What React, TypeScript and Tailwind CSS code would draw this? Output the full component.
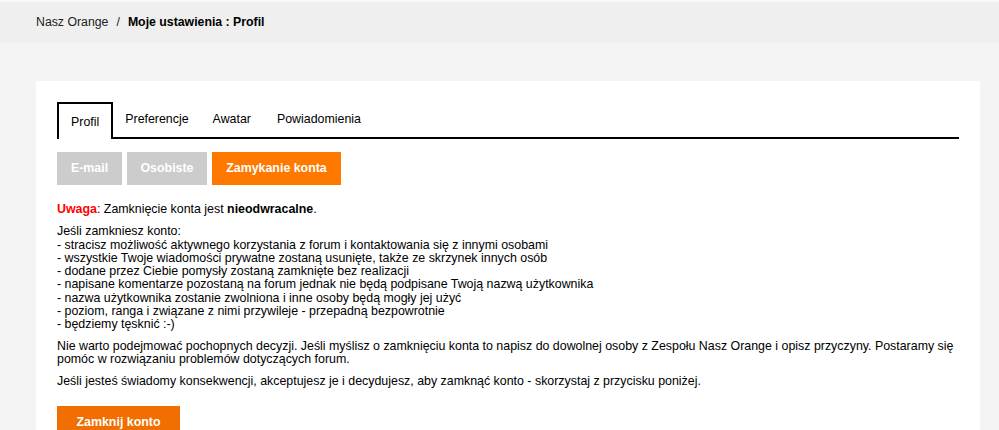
import React from "react";

export default function App() {
  const font = { fontFamily: '"Liberation Sans", Arial, sans-serif' };
  return (
    <div className="min-h-[430px] w-[999px] bg-[#f4f4f4] text-[12.4px] text-black" style={font}>
      <div className="h-[2px] bg-[#f8f8f8]" />
      <div className="flex h-[41px] items-center bg-[#efefef] pl-[36px] text-[12.3px]">
        <span className="text-[#222]">Nasz Orange</span>
        <span className="mx-[8px] text-[#222]">/</span>
        <span className="font-bold">Moje ustawienia : Profil</span>
      </div>
      <div className="pt-[38px]">
        <div className="ml-[36px] w-[944px] bg-white px-[21px] pt-[21px] pb-[10px]">
          <div className="flex h-[37px] items-end border-b-2 border-black">
            <div className="-mb-[2px] flex h-[37px] items-center border-2 border-b-0 border-black bg-white px-[12px] pt-[2px]">
              Profil
            </div>
            <div className="flex h-[35px] items-center pl-[12px] pr-[12px] pb-[1px]">Preferencje</div>
            <div className="flex h-[35px] items-center pl-[12px] pr-[13px] pb-[1px]">Awatar</div>
            <div className="flex h-[35px] items-center pl-[13px] pr-[12px] pb-[1px]">Powiadomienia</div>
          </div>
          <div className="mt-[13px] flex gap-[5px]">
            <button className="h-[33px] w-[65px] bg-[#cccccc] font-bold text-white">E-mail</button>
            <button className="h-[33px] w-[80px] bg-[#cccccc] font-bold text-white">Osobiste</button>
            <button className="h-[33px] w-[129px] bg-[#ff7900] font-bold text-white">Zamykanie konta</button>
          </div>
          <div className="mt-[18px] -mr-[6px] leading-[13.3px]">
            <p>
              <span className="font-bold text-[#ff0000]">Uwaga</span>: Zamknięcie konta jest{" "}
              <span className="font-bold">nieodwracalne</span>.
            </p>
            <p className="mt-[9px]">
              Jeśli zamkniesz konto:
              <br />- stracisz możliwość aktywnego korzystania z forum i kontaktowania się z innymi osobami
              <br />- wszystkie Twoje wiadomości prywatne zostaną usunięte, także ze skrzynek innych osób
              <br />- dodane przez Ciebie pomysły zostaną zamknięte bez realizacji
              <br />- napisane komentarze pozostaną na forum jednak nie będą podpisane Twoją nazwą użytkownika
              <br />- nazwa użytkownika zostanie zwolniona i inne osoby będą mogły jej użyć
              <br />- poziom, ranga i związane z nimi przywileje - przepadną bezpowrotnie
              <br />- będziemy tęsknić :-)
            </p>
            <p className="mt-[8px]">
              Nie warto podejmować pochopnych decyzji. Jeśli myślisz o zamknięciu konta to napisz do dowolnej osoby z
              Zespołu Nasz Orange i opisz przyczyny. Postaramy się pomóc w rozwiązaniu problemów dotyczących forum.
            </p>
            <p className="mt-[9px]">
              Jeśli jesteś świadomy konsekwencji, akceptujesz je i decydujesz, aby zamknąć konto - skorzystaj z
              przycisku poniżej.
            </p>
          </div>
          <button className="mt-[17px] h-[33px] w-[123px] bg-[#f16e00] font-bold text-white">Zamknij konto</button>
        </div>
      </div>
    </div>
  );
}
